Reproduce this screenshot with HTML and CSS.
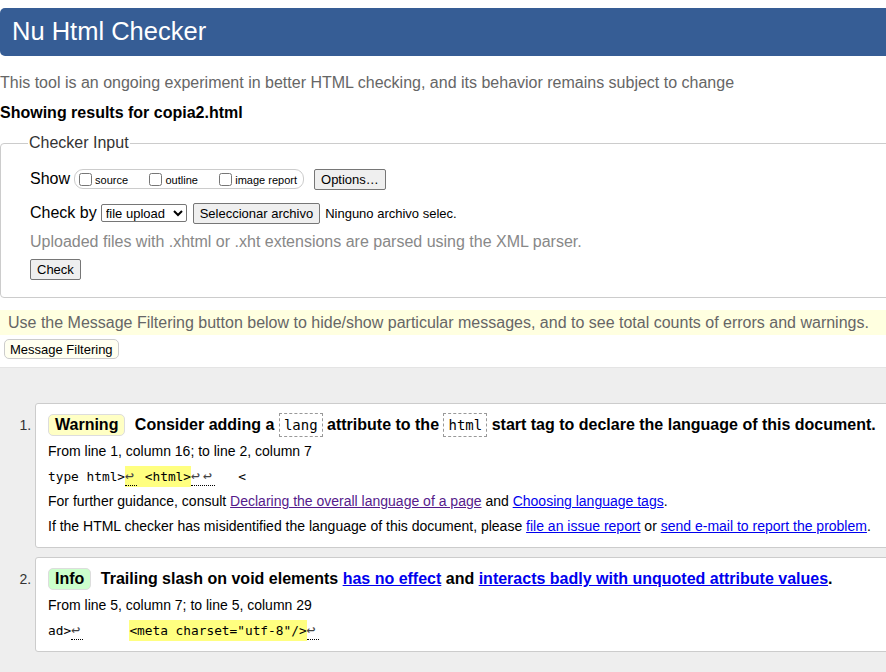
FILE: index.html
```html
<!DOCTYPE html>
<html lang="en">
<head>
<meta charset="utf-8">
<title>Nu Html Checker</title>
<link rel="stylesheet" href="styles.css">
</head>
<body>
<div class="page">
  <h1 class="title">Nu Html Checker</h1>
  <p class="intro">This tool is an ongoing experiment in better HTML checking, and its behavior remains subject to change</p>
  <p class="showing">Showing results for copia2.html</p>
  <fieldset class="input">
    <legend>Checker Input</legend>
    <div class="row">
      <span class="lbl">Show</span>
      <span class="group">
        <label><input type="checkbox"> source</label>
        <label><input type="checkbox"> outline</label>
        <label><input type="checkbox"> image report</label>
      </span>
      <button class="btn">Options…</button>
    </div>
    <div class="row">
      <span class="lbl">Check by</span>
      <select class="sel"><option>file upload</option></select>
      <button class="btn file">Seleccionar archivo</button>
      <span class="nofile">Ninguno archivo selec.</span>
    </div>
    <p class="hint">Uploaded files with .xhtml or .xht extensions are parsed using the XML parser.</p>
    <button class="btn check">Check</button>
  </fieldset>
  <p class="notice">Use the Message Filtering button below to hide/show particular messages, and to see total counts of errors and warnings.</p>
  <button class="filter">Message Filtering</button>
  <div class="results">
    <ol class="list">
      <li class="item">
        <div class="card">
          <p class="msg"><span class="badge warn">Warning</span> Consider adding a <code class="tok">lang</code> attribute to the <code class="tok">html</code> start tag to declare the language of this document.</p>
          <p class="loc">From line 1, column 16; to line 2, column 7</p>
          <p class="extract"><code>type html&gt;<b class="hl"><span class="lf">↩</span> &lt;html&gt;</b><span class="lf">↩↩</span>   &lt;</code></p>
          <p class="txt">For further guidance, consult <a class="visited" href="#">Declaring the overall language of a page</a> and <a href="#">Choosing language tags</a>.</p>
          <p class="txt">If the HTML checker has misidentified the language of this document, please <a href="#">file an issue report</a> or <a href="#">send e-mail to report the problem</a>.</p>
        </div>
      </li>
      <li class="item">
        <div class="card">
          <p class="msg"><span class="badge info">Info</span> Trailing slash on void elements <a href="#">has no effect</a> and <a href="#">interacts badly with unquoted attribute values</a>.</p>
          <p class="loc">From line 5, column 7; to line 5, column 29</p>
          <p class="extract"><code>ad&gt;<span class="lf">↩</span>      <b class="hl">&lt;meta charset="utf-8"/&gt;</b><span class="lf">↩</span></code></p>
        </div>
      </li>
    </ol>
  </div>
</div>
</body>
</html>
```
FILE: styles.css
```css
html, body {
  margin: 0;
  padding: 0;
  overflow: hidden;
  background: #fff;
}
body {
  font-family: "Liberation Sans", Arial, sans-serif;
  font-size: 16px;
  color: #000;
}
.page {
  width: 1000px;
  padding-top: 8px;
}
.title {
  margin: 0;
  height: 48px;
  line-height: 46px;
  background: #365d95;
  color: #fff;
  font-weight: normal;
  font-size: 25.5px;
  padding-left: 12px;
  border-radius: 5px 0 0 5px;
}
.intro {
  margin: 17px 0 0;
  line-height: 20px;
  color: #666;
}
.showing {
  margin: 10px 0 0;
  line-height: 20px;
  font-weight: bold;
}
.input {
  margin: 10px 0 0;
  padding: 14px 0 17px 29px;
  border: 1px solid #ccc;
  border-radius: 4px;
}
.input legend {
  padding: 0 1px;
  margin-left: -2px;
  color: #333;
  font-size: 16px;
  line-height: 20px;
}
.row {
  display: flex;
  align-items: center;
  height: 24px;
  margin-bottom: 10px;
}
.lbl {
  margin-right: 4px;
  line-height: 20px;
}
.group {
  display: inline-flex;
  align-items: center;
  border: 1px solid #ccc;
  border-radius: 9px;
  height: 17px;
  padding: 1px 6px 0 4px;
  margin-right: 10px;
  width: 218px;
  justify-content: space-between;
}
.group label {
  display: inline-flex;
  align-items: center;
  font-size: 11px;
  color: #000;
}
.group input {
  margin: 0 3px 0 0;
  width: 13px;
  height: 13px;
}
.btn {
  font-family: "Liberation Sans", Arial, sans-serif;
  font-size: 13px;
  background: #efefef;
  border: 1px solid #767676;
  border-radius: 2px;
  padding: 1px 6px;
  height: 21px;
  color: #000;
}
.sel {
  font-family: "Liberation Sans", Arial, sans-serif;
  font-size: 13px;
  height: 18px;
  width: 86px;
  border: 1px solid #767676;
  border-radius: 2px;
  background: #fff;
  margin-right: 6px;
  padding: 0;
}
.file {
  margin-right: 5px;
}
.nofile {
  font-size: 13px;
}
.hint {
  margin: -3px 0 0;
  line-height: 20px;
  color: #888;
}
.check {
  margin-top: 7px;
}
.notice {
  margin: 12px 0 0;
  background: #ffffe0;
  padding: 3px 8px 2px;
  line-height: 20px;
  color: #666;
}
.filter {
  margin: 4px 0 0 4px;
  font-family: "Liberation Sans", Arial, sans-serif;
  font-size: 13px;
  background: #fffff0;
  border: 1px solid #ccc;
  border-radius: 5px;
  height: 20px;
  padding: 0 5px;
  color: #000;
}
.results {
  margin-top: 8px;
  background: #eee;
  padding: 35px 0 30px;
  border-top: 1px solid #e4e4e4;
}
.list {
  margin: 0;
  padding-left: 35px;
}
.item {
  margin-bottom: 9px;
  color: #333;
  font-size: 14px;
}
.card {
  background: #fff;
  border: 1px solid #ccc;
  border-radius: 3px;
  padding: 9px 12px 8px;
  color: #000;
}
.card p {
  margin: 0;
}
.msg {
  font-weight: bold;
  font-size: 16px;
  line-height: 24px;
  margin-bottom: 2px !important;
  white-space: nowrap;
}
.badge {
  display: inline-block;
  padding: 0 6px;
  border: 1px solid #ddd;
  border-radius: 5px;
  line-height: 20px;
  margin-right: 5px;
}
.warn {
  background: #ffffc4;
}
.info {
  background: #ccffcc;
}
.tok {
  font-family: "DejaVu Sans Mono", "Liberation Mono", monospace;
  font-weight: normal;
  font-size: 14px;
  border: 1px dashed #999;
  padding: 3px 4px;
}
.loc {
  font-size: 14px;
  line-height: 25px;
}
.extract {
  line-height: 25px;
  height: 25px;
  white-space: pre;
}
.extract code {
  font-family: "DejaVu Sans Mono", "Liberation Mono", monospace;
  font-size: 12.8px;
}
.hl {
  background: #ffff80;
  font-weight: normal;
  padding: 3px 0;
}
.lf {
  border-bottom: 1px dotted #000;
  color: #444;
  font-size: 15px;
  letter-spacing: 3px;
}
.txt {
  font-size: 14px;
  line-height: 25px;
  white-space: nowrap;
}
a {
  color: #0000ee;
}
a.visited {
  color: #551a8b;
}
```
